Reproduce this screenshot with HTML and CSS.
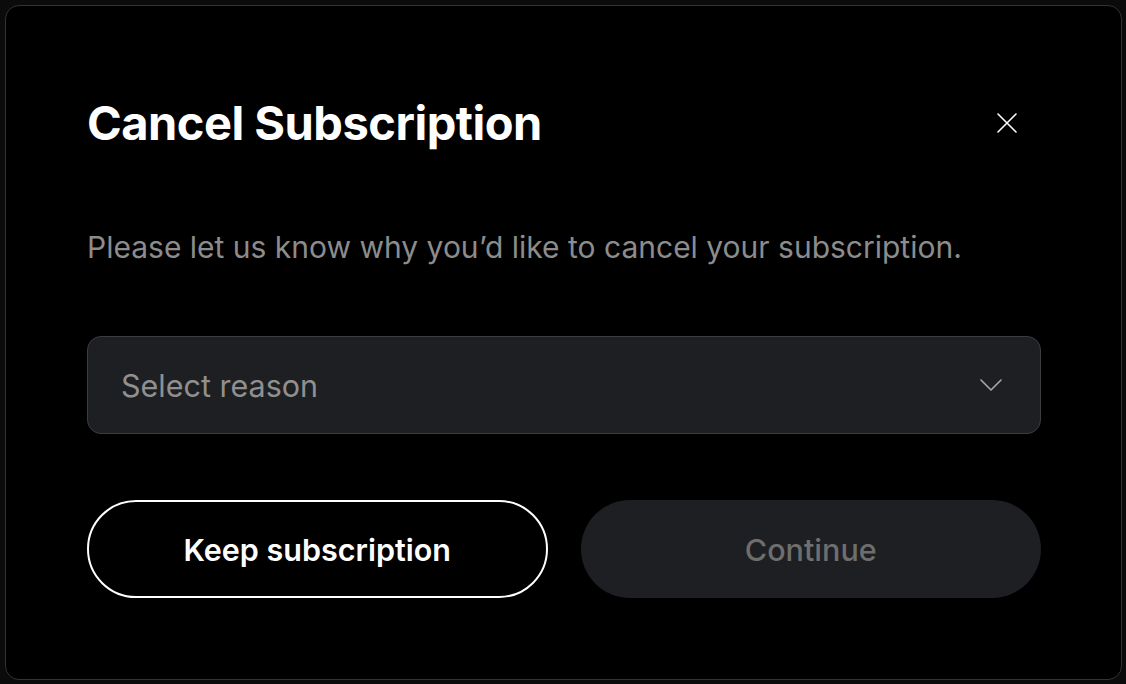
FILE: index.html
```html
<!DOCTYPE html>
<html lang="en">
<head>
<meta charset="utf-8">
<title>Cancel Subscription</title>
<link rel="stylesheet" href="styles.css">
</head>
<body>
<div class="modal" role="dialog" aria-labelledby="t">
  <div class="header">
    <h1 id="t" class="title">Cancel Subscription</h1>
    <button class="close" aria-label="Close">
      <svg width="20" height="20" viewBox="0 0 20 20"><path d="M1 1L19 19M19 1L1 19" stroke="#fff" stroke-width="1.6" stroke-linecap="round" fill="none"/></svg>
    </button>
  </div>
  <p class="desc">Please let us know why you’d like to cancel your subscription.</p>
  <div class="select">
    <span class="placeholder">Select reason</span>
    <svg class="chev" width="22" height="12" viewBox="0 0 22 12"><path d="M1 1L11 11L21 1" stroke="#a8a8a8" stroke-width="1.6" fill="none" stroke-linecap="round" stroke-linejoin="round"/></svg>
  </div>
  <div class="actions">
    <button class="btn keep">Keep subscription</button>
    <button class="btn cont" disabled>Continue</button>
  </div>
</div>
</body>
</html>
```
FILE: styles.css
```css
html, body { margin: 0; padding: 0; }
body {
  background: #0b0b0b;
  font-family: Inter, "Noto Sans", sans-serif;
  padding: 5px;
  width: 1126px;
  height: 684px;
  box-sizing: border-box;
}
.modal {
  width: 1117px;
  height: 675px;
  box-sizing: border-box;
  border: 1px solid #333336;
  border-radius: 14px;
  background: #000;
  padding: 88px 80px 0 81px;
  display: flex;
  flex-direction: column;
}
.header {
  display: flex;
  justify-content: space-between;
  align-items: center;
  height: 58px;
}
.title {
  margin: 0;
  color: #fff;
  font-size: 47px;
  line-height: 58px;
  font-weight: 700;
  letter-spacing: -0.5px;
}
.close {
  width: 68px;
  height: 58px;
  padding: 0;
  border: 0;
  background: none;
  display: flex;
  align-items: center;
  justify-content: center;
}
.desc {
  margin: 77px 0 0;
  color: #8c8c8c;
  font-size: 30px;
  line-height: 36px;
  letter-spacing: 0;
}
.select {
  margin-top: 71px;
  height: 98px;
  box-sizing: border-box;
  border: 1px solid #3c3d40;
  border-radius: 14px;
  background: #1e1f22;
  display: flex;
  align-items: center;
  justify-content: space-between;
  padding: 0 38px 0 33px;
}
.placeholder {
  color: #909090;
  font-size: 30.5px;
  letter-spacing: 0;
}
.actions {
  margin-top: 66px;
  display: grid;
  grid-template-columns: 1fr 1fr;
  gap: 33px;
}
.btn {
  height: 98px;
  border-radius: 49px;
  font-family: inherit;
  font-size: 30.5px;
  font-weight: 600;
  letter-spacing: 0;
  box-sizing: border-box;
}
.keep {
  background: #000;
  color: #fff;
  border: 2px solid #fff;
}
.cont {
  background: #1e1f22;
  color: #6e6e6e;
  border: 0;
  font-weight: 500;
}
```
